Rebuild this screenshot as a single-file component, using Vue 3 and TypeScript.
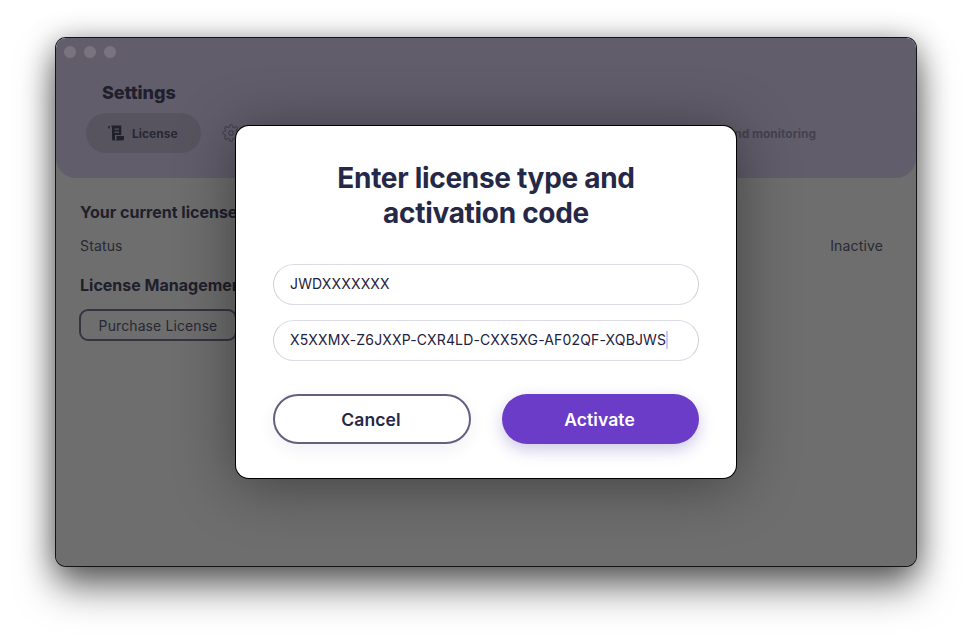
<template>
    <div class="Page">
        <div class="Window">
            <div class="Header">
                <div class="Lights">
                    <span></span>
                    <span></span>
                    <span></span>
                </div>
                <h1 class="Title">Settings</h1>
                <div class="Tabs">
                    <div class="Tab Active">
                        <svg class="TabIcon" viewBox="0 0 18 18" width="18" height="18">
                            <path d="M1 2h1.700v2.500H1.500z" />
                            <path fill-rule="evenodd"
                                d="M3.700 1.500H14.300V11H8V16.500H6.500C5.500 16.500 5 15.800 5 15V4C5 3 4.500 2.300 3.700 1.500zM7.500 4.500V5.700H12V4.500zM7.500 7.500V8.700H12V7.500z" />
                            <path d="M9.500 12H17V14.800C17 15.800 16.300 16.500 15.300 16.500H8C9 16 9.500 15.500 9.500 14.500z" />
                        </svg>
                        <span>License</span>
                    </div>
                    <div class="Tab">
                        <svg class="TabIcon" viewBox="0 0 24 24" width="18" height="18" fill="none"
                            stroke="currentColor" stroke-width="1.500">
                            <circle cx="12" cy="12" r="3" />
                            <path
                                d="M19.400 15a1.700 1.700 0 0 0 .3 1.800l.1.100a2 2 0 1 1-2.900 2.900l-.1-.1a1.700 1.700 0 0 0-2.800 1.200V21a2 2 0 1 1-4 0v-.1a1.700 1.700 0 0 0-2.900-1.200l-.1.100a2 2 0 1 1-2.800-2.900l.1-.1a1.700 1.700 0 0 0-1.200-2.800H3a2 2 0 1 1 0-4h.1a1.700 1.700 0 0 0 1.200-2.900l-.1-.1a2 2 0 1 1 2.900-2.800l.1.100a1.700 1.700 0 0 0 2.800-1.200V3a2 2 0 1 1 4 0v.1a1.700 1.700 0 0 0 2.900 1.200l.1-.1a2 2 0 1 1 2.800 2.900l-.1.100a1.700 1.700 0 0 0 1.200 2.800h.1a2 2 0 1 1 0 4h-.1a1.700 1.700 0 0 0-1.500 1z" />
                        </svg>
                        <span>General</span>
                    </div>
                    <div class="Tab Last">
                        <span>Diagnostics and monitoring</span>
                    </div>
                </div>
            </div>
            <div class="Body">
                <h2 class="SectionTitle">Your current license</h2>
                <div class="StatusRow">
                    <span>Status</span>
                    <span>Inactive</span>
                </div>
                <h2 class="SectionTitle">License Management</h2>
                <button class="PurchaseButton" type="button">Purchase License</button>
            </div>
            <div class="Overlay">
                <div class="Dialog">
                    <h2 class="DialogTitle">Enter license type and<br />activation code</h2>
                    <input class="Field" type="text" :value="LicenseType" readonly />
                    <div class="Field CodeField">
                        <span>{{ ActivationCode }}</span><i class="Caret"></i>
                    </div>
                    <div class="Actions">
                        <button class="ActionButton Cancel" type="button">Cancel</button>
                        <button class="ActionButton Activate" type="button">Activate</button>
                    </div>
                </div>
            </div>
        </div>
    </div>
</template>

<script setup lang="ts">
const LicenseType: string = "JWDXXXXXXX"
const ActivationCode: string = "X5XXMX-Z6JXXP-CXR4LD-CXX5XG-AF02QF-XQBJWS"
</script>

<style>
html,
body {
    margin: 0;
    background: #ffffff;
}
</style>

<style scoped>
.Page {
    width: 972px;
    height: 640px;
    box-sizing: border-box;
    padding: 38px 56px 74px;
    overflow: hidden;
    font-family: Inter, "Liberation Sans", sans-serif;
}

.Window {
    position: relative;
    height: 528px;
    border-radius: 10px;
    background: #ffffff;
    box-shadow: 0 0 0 1px #141414, 0 22px 38px rgba(0, 0, 0, 0.5), 0 4px 30px rgba(0, 0, 0, 0.42);
}

.Header {
    height: 140px;
    box-sizing: border-box;
    padding: 8px 0 0 8px;
    background: #e4d8f9;
    border-radius: 10px 10px 20px 20px;
}

.Lights {
    position: relative;
    z-index: 1;
    display: flex;
    gap: 8px;
}

.Lights span {
    width: 12px;
    height: 12px;
    border-radius: 50%;
    background: rgba(255, 255, 255, 0.14);
}

.Title {
    margin: 24px 0 0 38px;
    font-size: 18px;
    line-height: 22px;
    font-weight: 800;
    letter-spacing: -0.05px;
    color: #4a4866;
}

.Tabs {
    display: flex;
    align-items: center;
    margin: 9px 100px 0 22px;
}

.Tab {
    display: flex;
    align-items: center;
    gap: 7px;
    height: 40px;
    font-size: 12px;
    font-weight: 700;
    color: #9f9ab5;
}

.Tab.Active {
    width: 115px;
    box-sizing: border-box;
    padding-left: 21px;
    border-radius: 20px;
    background: #cdc3dd;
    color: #5c5a76;
    margin-right: 21px;
}

.Tab.Last {
    margin-left: auto;
}

.TabIcon {
    flex: none;
}

.TabIcon path {
    fill: #4e4c68;
}

.Tab:not(.Active) .TabIcon path {
    fill: none;
}

.Body {
    padding: 24px 33px 0 24px;
}

.SectionTitle {
    margin: 0;
    font-size: 16px;
    line-height: 20px;
    font-weight: 700;
    color: #4a4866;
}

.StatusRow {
    display: flex;
    justify-content: space-between;
    margin: 15px 0 20px;
    font-size: 14px;
    line-height: 18px;
    letter-spacing: 0.15px;
    color: #626279;
}

.PurchaseButton {
    display: block;
    margin: 14px 0 0 -1px;
    width: 158px;
    height: 32px;
    box-sizing: border-box;
    border: 2px solid #7c7c96;
    border-radius: 9px;
    background: transparent;
    font: 400 14px Inter, "Liberation Sans", sans-serif;
    letter-spacing: 0.1px;
    color: #5e5e78;
}

.Overlay {
    position: absolute;
    inset: 0;
    display: flex;
    align-items: center;
    justify-content: center;
    border-radius: 10px;
    background: rgba(0, 0, 0, 0.57);
}

.Dialog {
    width: 500px;
    height: 352px;
    box-sizing: border-box;
    padding: 35px 37px 0;
    display: flex;
    flex-direction: column;
    background: #ffffff;
    border-radius: 13px;
    box-shadow: 0 0 0 1px #000000, 0 6px 60px rgba(0, 0, 0, 0.42);
}

.DialogTitle {
    margin: 0 0 33px;
    font-size: 28px;
    line-height: 35px;
    font-weight: 700;
    letter-spacing: -0.3px;
    text-align: center;
    color: #252847;
}

.Field {
    display: flex;
    align-items: center;
    width: 100%;
    height: 41px;
    flex: none;
    box-sizing: border-box;
    padding: 0 16px 2px;
    margin-bottom: 15px;
    border: 1px solid #cfcfd6;
    border-top-color: #dddce4;
    border-bottom-color: #dddce4;
    border-radius: 21px;
    outline: none;
    background: #ffffff;
    font: 400 14px Inter, "Liberation Sans", sans-serif;
    letter-spacing: 0.15px;
    color: #1f2140;
}

.CodeField {
    white-space: nowrap;
}

.Caret {
    width: 2px;
    height: 18px;
    background: #cfc8f3;
}

.Actions {
    display: flex;
    justify-content: space-between;
    margin-top: 18px;
}

.ActionButton {
    width: 198px;
    height: 50px;
    border-radius: 25px;
    font: 600 17.500px Inter, "Liberation Sans", sans-serif;
    letter-spacing: 0.1px;
    box-sizing: border-box;
}

.Cancel {
    padding: 0 2px 0 0;
    border: 2px solid #63607f;
    background: #ffffff;
    color: #252847;
    box-shadow: 0 6px 16px rgba(80, 70, 130, 0.08);
}

.Activate {
    width: 197px;
    padding: 0 2px 0 0;
    border: none;
    background: #6a3cc7;
    color: #ffffff;
    box-shadow: 0 6px 16px rgba(80, 60, 160, 0.28);
}
</style>
